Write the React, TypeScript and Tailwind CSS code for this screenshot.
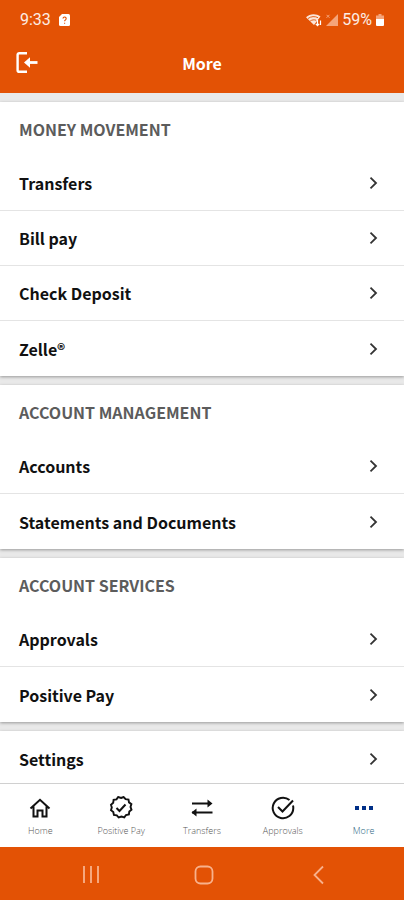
import type { ReactNode } from "react";

type Section = { title?: string; items: string[] };

const sections: Section[] = [
    { title: "MONEY MOVEMENT", items: ["Transfers", "Bill pay", "Check Deposit", "Zelle®"] },
    { title: "ACCOUNT MANAGEMENT", items: ["Accounts", "Statements and Documents"] },
    { title: "ACCOUNT SERVICES", items: ["Approvals", "Positive Pay"] },
    { items: ["Settings"] },
];

function StatusBar() {
    return (
        <div className="flex h-10 items-center justify-between px-5 font-['Roboto',sans-serif] text-base text-white/90">
            <div className="flex items-center gap-2">
                <span>9:33</span>
                <svg className="h-3 w-[11px]" viewBox="0 0 11 12">
                    <path d="M3 0h6.500a1.500 1.500 0 0 1 1.500 1.500v9a1.500 1.500 0 0 1-1.500 1.500h-8A1.500 1.500 0 0 1 0 10.500V3z" fill="#fff" />
                    <path d="M4 4.600a1.600 1.600 0 1 1 2.400 1.400c-.6.300-.8.600-.8 1.200M5.600 8.700v1" fill="none" stroke="#e35205" strokeWidth="1.100" />
                </svg>
            </div>
            <div className="flex items-center gap-1">
                <svg className="h-[14px] w-4" viewBox="0 0 16 14">
                    <path d="M0 4.200C4 .500 10 .200 14.500 3.600L12.500 6 8 12z" fill="#fff" opacity=".85" />
                    <path d="M2 5.500c3-2.200 7-2.500 10-.8M4.200 8c2-1.300 4-1.500 6-.7" fill="none" stroke="#e35205" strokeWidth=".9" />
                    <path d="M11.500 12.500V7M9.800 10.800l1.700 1.900 1.700-1.900M14.500 7.500v4.500" fill="none" stroke="#fff" strokeWidth="1.200" />
                </svg>
                <svg className="h-3 w-3" viewBox="0 0 12 12">
                    <path d="M12 0v12H0z" fill="#f5a47a" />
                    <path d="M.5.800l3 3M3.500.800l-3 3" stroke="#f5a47a" strokeWidth="1" />
                </svg>
                <span>59%</span>
                <svg className="h-3 w-2" viewBox="0 0 8 12">
                    <path d="M2.500 0h3v1.500H8V5H0V1.500h2.500z" fill="#f5a47a" />
                    <path d="M0 5h8v6a1 1 0 0 1-1 1H1a1 1 0 0 1-1-1z" fill="#fff" />
                </svg>
            </div>
        </div>
    );
}

function ListRow({ label }: { label: string }) {
    return (
        <li className="h-[55px] border-b border-[#e4e4e4] last:border-b-0">
            <a href="#" className="flex h-full items-center justify-between pr-[25px] pl-[19px] text-base font-bold text-[#111]">
                {label}
                <svg className="h-3 w-3" viewBox="0 0 12 12" fill="none" stroke="#333" strokeWidth="1.800">
                    <path d="M3.500.700L9 6l-5.500 5.300" />
                </svg>
            </a>
        </li>
    );
}

function NavItem({ label, active, children }: { label: string; active?: boolean; children: ReactNode }) {
    return (
        <a href="#" className={active ? "flex flex-1 flex-col items-center text-[#2b6684]" : "flex flex-1 flex-col items-center text-[#555]"}>
            <svg className="h-6 w-6" viewBox="0 0 24 24" fill="none" stroke="#111" strokeWidth="2">
                {children}
            </svg>
            <span className="mt-[3px] text-[9px] leading-4 font-light">{label}</span>
        </a>
    );
}

export default function App() {
    return (
        <div className="flex h-screen flex-col bg-[#e9e9e9] font-['Noto_Sans_CJK_JP',sans-serif]">
            <header className="shrink-0 bg-[#e35205]">
                <StatusBar />
                <div className="grid h-[53px] grid-cols-3 items-start px-4">
                    <button type="button" aria-label="Log out" className="mt-3 w-6">
                        <svg className="h-[21px] w-[22px]" viewBox="0 0 22 21" fill="none" stroke="#fff" strokeWidth="2.400">
                            <path d="M11 1.200H3.200a1.600 1.600 0 0 0-1.600 1.600v15.400a1.600 1.600 0 0 0 1.600 1.600H11" />
                            <path d="M11 10.500h10.500" strokeWidth="2.800" />
                            <path d="M8 10.500l6-5.200v10.400z" fill="#fff" stroke="none" />
                        </svg>
                    </button>
                    <h1 className="mt-[11px] text-center text-base leading-6 font-bold text-white">More</h1>
                </div>
            </header>

            <main className="flex min-h-0 flex-1 flex-col gap-[9px] overflow-hidden pt-[9px]">
                {sections.map((section, i) => (
                    <section key={i} className="shrink-0 bg-white shadow-[0_1px_3px_rgba(0,0,0,0.35)]">
                        {section.title && (
                            <h2 className="flex h-[54px] items-center pl-[19px] text-base font-bold text-[#5c5c5c]">{section.title}</h2>
                        )}
                        <ul>
                            {section.items.map((item) => (
                                <ListRow key={item} label={item} />
                            ))}
                        </ul>
                    </section>
                ))}
            </main>

            <nav className="z-10 flex h-16 shrink-0 border-t border-[#d0d0d0] bg-white pt-3 font-['Open_Sans',sans-serif]">
                <NavItem label="Home">
                    <path d="M2.500 12.500L12 3.800l9.500 8.700M5.500 10.500v10h4v-6h5v6h4v-10" />
                </NavItem>
                <NavItem label="Positive Pay">
                    <path d="M12 2l2.600-1 2 2.200 2.900.3.500 2.900 2.400 1.700-.9 2.800 1 2.700-2.200 1.900-.4 2.900-2.900.6-1.700 2.400-2.800-.8-2.800.9-1.900-2.200-2.900-.4-.6-2.900-2.300-1.800.8-2.800-.8-2.700 2.200-1.900.4-2.900 2.900-.5 1.700-2.400z" strokeWidth="1.900" />
                    <path d="M7.500 12l3 3 6-6.500" />
                </NavItem>
                <NavItem label="Transfers">
                    <path d="M1.500 7.500H20M1.500 16.500H22" transform="translate(.5 0)" />
                    <path d="M17.500 3.500l5 4-5 4zM6.500 12.500l-5 4 5 4z" fill="#111" stroke="none" />
                </NavItem>
                <NavItem label="Approvals">
                    <path d="M18.500 4A10.300 10.300 0 1 0 22.300 12c0-.9-.1-1.700-.3-2.500M7 11l4.500 4.500L22 4.500" />
                </NavItem>
                <NavItem label="More" active>
                    <path d="M3 10h4v4H3zM10 10h4v4h-4zM17 10h4v4h-4z" fill="#002f87" stroke="none" />
                </NavItem>
            </nav>

            <div className="flex h-[53px] shrink-0 items-center justify-around bg-[#e35205] pt-0.5 pr-[29px] pl-[34px]">
                <button type="button" aria-label="Recent apps">
                    <svg className="h-5 w-5" viewBox="0 0 20 20" stroke="#f8b18c" strokeWidth="1.800">
                        <path d="M3 1v17M10 1v17M17 1v17" />
                    </svg>
                </button>
                <button type="button" aria-label="Home screen">
                    <svg className="h-5 w-5" viewBox="0 0 20 20" fill="none" stroke="#f8b18c" strokeWidth="1.800">
                        <rect x="1.500" y="1.500" width="17" height="17" rx="5" />
                    </svg>
                </button>
                <button type="button" aria-label="Back">
                    <svg className="h-5 w-5" viewBox="0 0 20 20" fill="none" stroke="#f8b18c" strokeWidth="1.800">
                        <path d="M15 1.500L6.500 10l8.500 8.500" />
                    </svg>
                </button>
            </div>
        </div>
    );
}
